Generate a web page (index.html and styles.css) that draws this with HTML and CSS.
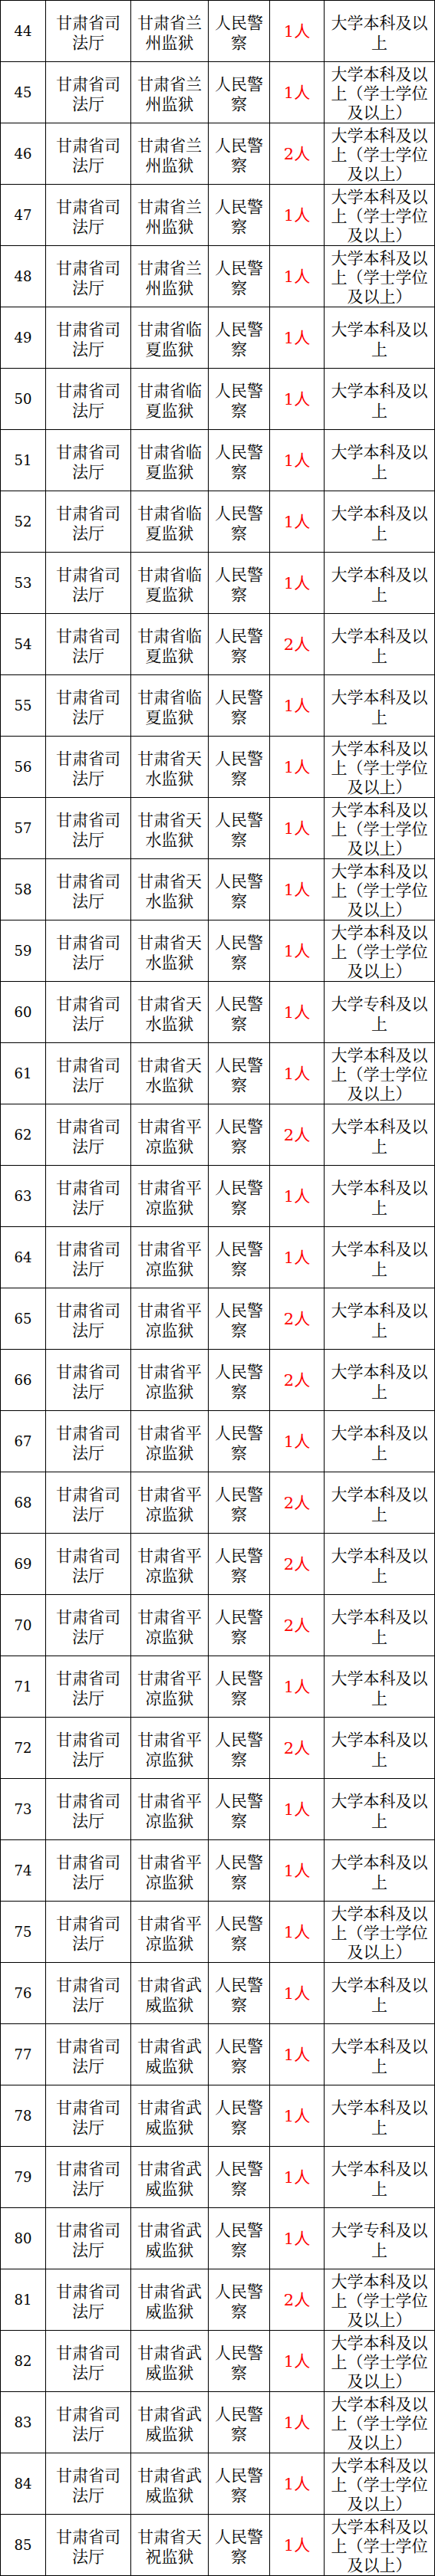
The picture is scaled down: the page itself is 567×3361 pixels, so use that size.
FILE: index.html
```html
<!DOCTYPE html>
<html lang="zh-CN">
<head>
<meta charset="utf-8">
<title>岗位表</title>
<link rel="stylesheet" href="styles.css">
</head>
<body>
<div class="table">
<div class="c num">44</div><div class="c">甘肃省司法厅</div><div class="c">甘肃省兰州监狱</div><div class="c">人民警察</div><div class="c cnt">1人</div><div class="c deg">大学本科及以上</div>
<div class="c num">45</div><div class="c">甘肃省司法厅</div><div class="c">甘肃省兰州监狱</div><div class="c">人民警察</div><div class="c cnt">1人</div><div class="c deg long">大学本科及以上（学士学位及以上）</div>
<div class="c num">46</div><div class="c">甘肃省司法厅</div><div class="c">甘肃省兰州监狱</div><div class="c">人民警察</div><div class="c cnt">2人</div><div class="c deg long">大学本科及以上（学士学位及以上）</div>
<div class="c num">47</div><div class="c">甘肃省司法厅</div><div class="c">甘肃省兰州监狱</div><div class="c">人民警察</div><div class="c cnt">1人</div><div class="c deg long">大学本科及以上（学士学位及以上）</div>
<div class="c num">48</div><div class="c">甘肃省司法厅</div><div class="c">甘肃省兰州监狱</div><div class="c">人民警察</div><div class="c cnt">1人</div><div class="c deg long">大学本科及以上（学士学位及以上）</div>
<div class="c num">49</div><div class="c">甘肃省司法厅</div><div class="c">甘肃省临夏监狱</div><div class="c">人民警察</div><div class="c cnt">1人</div><div class="c deg">大学本科及以上</div>
<div class="c num">50</div><div class="c">甘肃省司法厅</div><div class="c">甘肃省临夏监狱</div><div class="c">人民警察</div><div class="c cnt">1人</div><div class="c deg">大学本科及以上</div>
<div class="c num">51</div><div class="c">甘肃省司法厅</div><div class="c">甘肃省临夏监狱</div><div class="c">人民警察</div><div class="c cnt">1人</div><div class="c deg">大学本科及以上</div>
<div class="c num">52</div><div class="c">甘肃省司法厅</div><div class="c">甘肃省临夏监狱</div><div class="c">人民警察</div><div class="c cnt">1人</div><div class="c deg">大学本科及以上</div>
<div class="c num">53</div><div class="c">甘肃省司法厅</div><div class="c">甘肃省临夏监狱</div><div class="c">人民警察</div><div class="c cnt">1人</div><div class="c deg">大学本科及以上</div>
<div class="c num">54</div><div class="c">甘肃省司法厅</div><div class="c">甘肃省临夏监狱</div><div class="c">人民警察</div><div class="c cnt">2人</div><div class="c deg">大学本科及以上</div>
<div class="c num">55</div><div class="c">甘肃省司法厅</div><div class="c">甘肃省临夏监狱</div><div class="c">人民警察</div><div class="c cnt">1人</div><div class="c deg">大学本科及以上</div>
<div class="c num">56</div><div class="c">甘肃省司法厅</div><div class="c">甘肃省天水监狱</div><div class="c">人民警察</div><div class="c cnt">1人</div><div class="c deg long">大学本科及以上（学士学位及以上）</div>
<div class="c num">57</div><div class="c">甘肃省司法厅</div><div class="c">甘肃省天水监狱</div><div class="c">人民警察</div><div class="c cnt">1人</div><div class="c deg long">大学本科及以上（学士学位及以上）</div>
<div class="c num">58</div><div class="c">甘肃省司法厅</div><div class="c">甘肃省天水监狱</div><div class="c">人民警察</div><div class="c cnt">1人</div><div class="c deg long">大学本科及以上（学士学位及以上）</div>
<div class="c num">59</div><div class="c">甘肃省司法厅</div><div class="c">甘肃省天水监狱</div><div class="c">人民警察</div><div class="c cnt">1人</div><div class="c deg long">大学本科及以上（学士学位及以上）</div>
<div class="c num">60</div><div class="c">甘肃省司法厅</div><div class="c">甘肃省天水监狱</div><div class="c">人民警察</div><div class="c cnt">1人</div><div class="c deg">大学专科及以上</div>
<div class="c num">61</div><div class="c">甘肃省司法厅</div><div class="c">甘肃省天水监狱</div><div class="c">人民警察</div><div class="c cnt">1人</div><div class="c deg long">大学本科及以上（学士学位及以上）</div>
<div class="c num">62</div><div class="c">甘肃省司法厅</div><div class="c">甘肃省平凉监狱</div><div class="c">人民警察</div><div class="c cnt">2人</div><div class="c deg">大学本科及以上</div>
<div class="c num">63</div><div class="c">甘肃省司法厅</div><div class="c">甘肃省平凉监狱</div><div class="c">人民警察</div><div class="c cnt">1人</div><div class="c deg">大学本科及以上</div>
<div class="c num">64</div><div class="c">甘肃省司法厅</div><div class="c">甘肃省平凉监狱</div><div class="c">人民警察</div><div class="c cnt">1人</div><div class="c deg">大学本科及以上</div>
<div class="c num">65</div><div class="c">甘肃省司法厅</div><div class="c">甘肃省平凉监狱</div><div class="c">人民警察</div><div class="c cnt">2人</div><div class="c deg">大学本科及以上</div>
<div class="c num">66</div><div class="c">甘肃省司法厅</div><div class="c">甘肃省平凉监狱</div><div class="c">人民警察</div><div class="c cnt">2人</div><div class="c deg">大学本科及以上</div>
<div class="c num">67</div><div class="c">甘肃省司法厅</div><div class="c">甘肃省平凉监狱</div><div class="c">人民警察</div><div class="c cnt">1人</div><div class="c deg">大学本科及以上</div>
<div class="c num">68</div><div class="c">甘肃省司法厅</div><div class="c">甘肃省平凉监狱</div><div class="c">人民警察</div><div class="c cnt">2人</div><div class="c deg">大学本科及以上</div>
<div class="c num">69</div><div class="c">甘肃省司法厅</div><div class="c">甘肃省平凉监狱</div><div class="c">人民警察</div><div class="c cnt">2人</div><div class="c deg">大学本科及以上</div>
<div class="c num">70</div><div class="c">甘肃省司法厅</div><div class="c">甘肃省平凉监狱</div><div class="c">人民警察</div><div class="c cnt">2人</div><div class="c deg">大学本科及以上</div>
<div class="c num">71</div><div class="c">甘肃省司法厅</div><div class="c">甘肃省平凉监狱</div><div class="c">人民警察</div><div class="c cnt">1人</div><div class="c deg">大学本科及以上</div>
<div class="c num">72</div><div class="c">甘肃省司法厅</div><div class="c">甘肃省平凉监狱</div><div class="c">人民警察</div><div class="c cnt">2人</div><div class="c deg">大学本科及以上</div>
<div class="c num">73</div><div class="c">甘肃省司法厅</div><div class="c">甘肃省平凉监狱</div><div class="c">人民警察</div><div class="c cnt">1人</div><div class="c deg">大学本科及以上</div>
<div class="c num">74</div><div class="c">甘肃省司法厅</div><div class="c">甘肃省平凉监狱</div><div class="c">人民警察</div><div class="c cnt">1人</div><div class="c deg">大学本科及以上</div>
<div class="c num">75</div><div class="c">甘肃省司法厅</div><div class="c">甘肃省平凉监狱</div><div class="c">人民警察</div><div class="c cnt">1人</div><div class="c deg long">大学本科及以上（学士学位及以上）</div>
<div class="c num">76</div><div class="c">甘肃省司法厅</div><div class="c">甘肃省武威监狱</div><div class="c">人民警察</div><div class="c cnt">1人</div><div class="c deg">大学本科及以上</div>
<div class="c num">77</div><div class="c">甘肃省司法厅</div><div class="c">甘肃省武威监狱</div><div class="c">人民警察</div><div class="c cnt">1人</div><div class="c deg">大学本科及以上</div>
<div class="c num">78</div><div class="c">甘肃省司法厅</div><div class="c">甘肃省武威监狱</div><div class="c">人民警察</div><div class="c cnt">1人</div><div class="c deg">大学本科及以上</div>
<div class="c num">79</div><div class="c">甘肃省司法厅</div><div class="c">甘肃省武威监狱</div><div class="c">人民警察</div><div class="c cnt">1人</div><div class="c deg">大学本科及以上</div>
<div class="c num">80</div><div class="c">甘肃省司法厅</div><div class="c">甘肃省武威监狱</div><div class="c">人民警察</div><div class="c cnt">1人</div><div class="c deg">大学专科及以上</div>
<div class="c num">81</div><div class="c">甘肃省司法厅</div><div class="c">甘肃省武威监狱</div><div class="c">人民警察</div><div class="c cnt">2人</div><div class="c deg long">大学本科及以上（学士学位及以上）</div>
<div class="c num">82</div><div class="c">甘肃省司法厅</div><div class="c">甘肃省武威监狱</div><div class="c">人民警察</div><div class="c cnt">1人</div><div class="c deg long">大学本科及以上（学士学位及以上）</div>
<div class="c num">83</div><div class="c">甘肃省司法厅</div><div class="c">甘肃省武威监狱</div><div class="c">人民警察</div><div class="c cnt">1人</div><div class="c deg long">大学本科及以上（学士学位及以上）</div>
<div class="c num">84</div><div class="c">甘肃省司法厅</div><div class="c">甘肃省武威监狱</div><div class="c">人民警察</div><div class="c cnt">1人</div><div class="c deg long">大学本科及以上（学士学位及以上）</div>
<div class="c num">85</div><div class="c">甘肃省司法厅</div><div class="c">甘肃省天祝监狱</div><div class="c">人民警察</div><div class="c cnt">1人</div><div class="c deg long">大学本科及以上（学士学位及以上）</div>
</div>
</body>
</html>
```

FILE: styles.css
```css
html, body {
  margin: 0;
  padding: 0;
  background: #ffffff;
}

.table {
  display: grid;
  grid-template-columns: 58px 110px 100px 79px 70px 143px;
  grid-auto-rows: 79px;
  gap: 1px;
  padding: 1px;
  background: #000000;
  width: 567px;
  box-sizing: border-box;
  font-family: "Noto Serif CJK SC", "Noto Sans CJK SC", serif;
  font-size: 21px;
  line-height: 26px;
  color: #000000;
}

.c {
  background: #ffffff;
  display: flex;
  align-items: center;
  justify-content: center;
  text-align: center;
  padding: 0 6px;
  overflow: hidden;
  box-sizing: border-box;
}

.c:nth-child(6n+3),
.c:nth-child(6n+4) {
  padding: 0;
}

.num {
  font-family: "DejaVu Serif", serif;
  font-size: 18px;
  padding: 0;
}

.cnt {
  font-family: "DejaVu Serif", "Noto Sans CJK SC", serif;
  color: #ff0000;
  padding: 0;
}

.deg {
  padding: 0 2px;
}

.deg.long {
  line-height: 25px;
}
```
